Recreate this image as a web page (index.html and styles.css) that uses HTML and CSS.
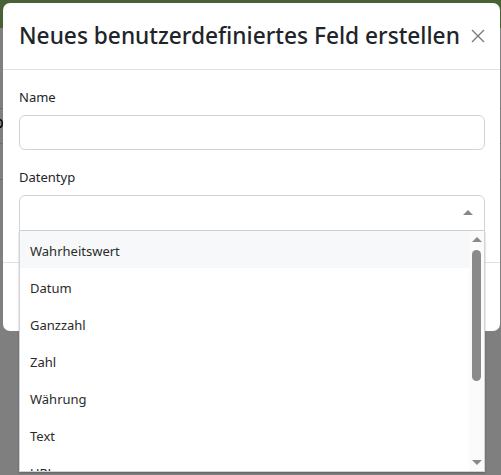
FILE: index.html
```html
<!DOCTYPE html>
<html lang="de">
<head>
<meta charset="utf-8">
<title>Neues benutzerdefiniertes Feld erstellen</title>
<link rel="stylesheet" href="styles.css">
</head>
<body>
<div class="page">
  <div class="navbar"></div>
  <div class="page-row row-a"><span class="page-text">p</span></div>
  <div class="page-row row-b"></div>
</div>
<div class="backdrop"></div>
<div class="modal">
  <div class="modal-header">
    <h5 class="modal-title">Neues benutzerdefiniertes Feld erstellen</h5>
    <button class="close" aria-label="Schließen">
      <svg width="14" height="14" viewBox="0 0 14 14"><path d="M1 1 L13 13 M13 1 L1 13" stroke="#7a7a7a" stroke-width="1.4" fill="none"/></svg>
    </button>
  </div>
  <div class="modal-body">
    <div class="field">
      <label class="label">Name</label>
      <div class="input"></div>
    </div>
    <div class="field">
      <label class="label">Datentyp</label>
      <div class="select-wrap">
        <div class="select">
          <span class="caret"></span>
        </div>
        <div class="dropdown">
          <ul class="options">
            <li class="option active">Wahrheitswert</li>
            <li class="option">Datum</li>
            <li class="option">Ganzzahl</li>
            <li class="option">Zahl</li>
            <li class="option">Währung</li>
            <li class="option">Text</li>
            <li class="option">URL</li>
          </ul>
          <div class="scrollbar">
            <span class="sb-up"></span>
            <span class="sb-thumb"></span>
            <span class="sb-space"></span>
            <span class="sb-down"></span>
          </div>
        </div>
      </div>
    </div>
  </div>
  <div class="modal-footer"></div>
</div>
</body>
</html>
```
FILE: styles.css
```css
* { box-sizing: border-box; }
html, body { margin: 0; padding: 0; }
body {
  width: 501px;
  height: 475px;
  overflow: hidden;
  background: #fff;
  font-family: "Noto Sans", "Open Sans", sans-serif;
  color: #212529;
  position: relative;
}
.page { display: flex; flex-direction: column; }
.navbar { height: 28px; background: #8fc46a; }
.page-row { height: 36px; border-bottom: 1px solid #dcdcdc; }
.row-a { margin-top: 80px; border-top: 1px solid #dcdcdc; }
.page-text { font-size: 16px; line-height: 26px; margin-left: -6px; color: #000; }
.backdrop {
  position: absolute;
  inset: 0;
  background: rgba(0,0,0,0.5);
}
.modal {
  position: absolute;
  top: 3px;
  left: 3px;
  width: 497px;
  background: #fff;
  border-radius: 7px;
}
.modal-header {
  display: flex;
  align-items: center;
  justify-content: space-between;
  height: 67px;
  padding: 0 15px 0 16px;
  border-bottom: 1px solid #dee2e6;
}
.modal-title {
  margin: 0;
  font-size: 22.7px;
  font-weight: 500;
  color: #212529;
  padding-bottom: 2px;
}
.close {
  border: 0;
  background: none;
  padding: 0;
  width: 14px;
  height: 14px;
  display: flex;
}
.modal-body { padding: 16px 16px 15px; }
.field { margin-bottom: 16px; }
.label {
  display: block;
  font-size: 13px;
  line-height: 21px;
  padding-top: 1px;
  margin-bottom: 7px;
}
.input {
  height: 35px;
  width: 466px;
  border: 1px solid #ced4da;
  border-radius: 6px;
}
.select-wrap { position: relative; width: 466px; }
.select {
  height: 36px;
  border: 1px solid #ced4da;
  border-radius: 6px 6px 0 0;
  display: flex;
  align-items: center;
  justify-content: flex-end;
  padding-right: 11px;
}
.caret {
  width: 0; height: 0;
  border-left: 5px solid transparent;
  border-right: 5px solid transparent;
  border-bottom: 5px solid #888;
  margin-top: -1px;
}
.dropdown {
  position: absolute;
  top: 36px;
  left: 0;
  width: 466px;
  height: 241px;
  background: #fff;
  border: 1px solid #ced4da;
  border-top: 0;
  display: flex;
  overflow: hidden;
  box-shadow: 0 1px 2px rgba(0,0,0,0.25);
  z-index: 2;
}
.options {
  list-style: none;
  margin: 0;
  padding: 0;
  flex: 1;
}
.option {
  height: 37px;
  line-height: 34px;
  padding-top: 3px;
  padding-left: 10px;
  font-size: 13px;
  color: #2b2b2b;
}
.option.active { background: #f6f8fa; }
.scrollbar {
  width: 15px;
  display: flex;
  flex-direction: column;
  align-items: center;
  background: #fbfbfb;
  padding: 6px 0 6px;
}
.sb-up, .sb-down {
  width: 0; height: 0;
  border-left: 5px solid transparent;
  border-right: 5px solid transparent;
}
.sb-up { border-bottom: 5px solid #8a8a8a; }
.sb-down { border-top: 5px solid #8a8a8a; }
.sb-thumb {
  width: 9px;
  height: 131px;
  margin-top: 8px;
  background: #8a8a8a;
  border-radius: 5px;
}
.sb-space { flex: 1; }
.modal-footer {
  height: 69px;
  border-top: 1px solid #dee2e6;
  border-radius: 0 0 7px 7px;
}
```
